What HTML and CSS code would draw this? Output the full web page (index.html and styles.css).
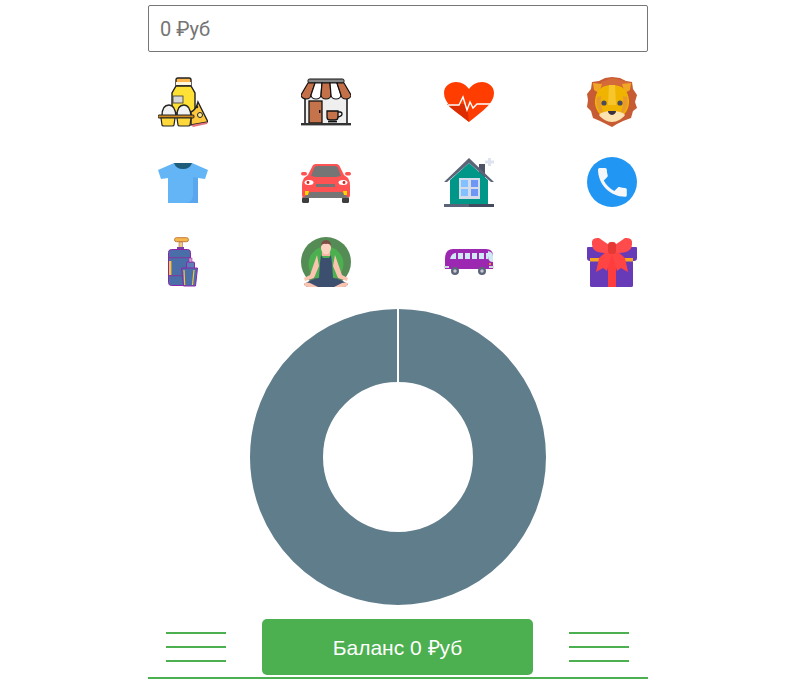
FILE: index.html
```html
<!DOCTYPE html>
<html lang="ru">
<head>
<meta charset="utf-8">
<title>Баланс</title>
<link rel="stylesheet" href="styles.css">
</head>
<body>
<main class="app">
  <input class="amount" type="text" placeholder="0 ₽уб">
  <div class="categories">
    <svg class="icon" viewBox="0 0 50 50">
      <path d="M20 1h11q2 0 2 2v5H18V3q0-2 2-2z" fill="#ffb74d" stroke="#222" stroke-width="1.4"/>
      <rect x="18" y="5" width="15" height="3" fill="#fff8e1"/>
      <path d="M18 9h15l4 7v20H14V16z" fill="#ffe135" stroke="#222" stroke-width="1.4"/>
      <rect x="15" y="19" width="10" height="7" fill="#d7d7d7" stroke="#333" stroke-width=".8"/>
      <path d="M40 25l10 20-17 3v-13q5-2 7-10z" fill="#ffc83d" stroke="#222" stroke-width="1.4"/>
      <path d="M33 48l17-3-1 2-14 3z" fill="#e5737b"/>
      <circle cx="42" cy="38" r="2.5" fill="#ffe9a0" stroke="#222"/>
      <circle cx="39" cy="30" r="1.2" fill="#222"/>
      <path d="M4 39q0-11 7-11 6 0 7 11zM19 39q0-11 7-11 6 0 7 11z" fill="#f2f2f2" stroke="#222" stroke-width="1.4"/>
      <rect x="0" y="38" width="36" height="3" rx="1" fill="#d18a1c" stroke="#222"/>
      <path d="M3 41h14l-1 7q0 1-2 1H6q-2 0-2-1zM19 41h14l-1 7q0 1-2 1H22q-2 0-2-1z" fill="#ffd93b" stroke="#222" stroke-width="1.2"/>
    </svg>
    <svg class="icon" viewBox="0 0 50 50">
      <rect x="4" y="19" width="42" height="28" fill="#efefef" stroke="#111" stroke-width="1.5"/>
      <rect x="7" y="2" width="36" height="4" rx="1.5" fill="#8a8a8a" stroke="#111"/>
      <path d="M7 6h7l-4 12a5 4 0 0 1-10 0z" fill="#c4714a" stroke="#111" stroke-width="1.2"/>
      <path d="M14 6h7l-1 12a5 4 0 0 1-10 0z" fill="#fff" stroke="#111" stroke-width="1.2"/>
      <path d="M21 6h8l1 12a5 4 0 0 1-10 0z" fill="#c4714a" stroke="#111" stroke-width="1.2"/>
      <path d="M29 6h7l4 12a5 4 0 0 1-10 0z" fill="#fff" stroke="#111" stroke-width="1.2"/>
      <path d="M36 6h7l7 12a5 4 0 0 1-10 0z" fill="#c4714a" stroke="#111" stroke-width="1.2"/>
      <rect x="8" y="24" width="13" height="22" fill="#c4734a" stroke="#111" stroke-width="1.3"/>
      <rect x="18" y="33" width="1.5" height="3" fill="#111"/>
      <path d="M26 34h11v6q0 3-3 3h-5q-3 0-3-3z" fill="#c4734a" stroke="#111" stroke-width="1.3"/>
      <path d="M37 35h2q2 0 2 2t-4 3" fill="none" stroke="#111" stroke-width="1.3"/>
      <rect x="27" y="44" width="9" height="1.4" fill="#111"/>
      <rect x="0" y="46" width="50" height="2.4" fill="#333"/>
    </svg>
    <svg class="icon" viewBox="0 0 50 50">
      <path d="M25 45C10 33 0 26 0 16 0 9 6 5 12 5c6 0 10 3 13 7 3-4 7-7 13-7 6 0 12 4 12 11 0 10-10 17-25 29z" fill="#ff3d00"/>
      <path d="M25 45C14 36 7 32 3 27h20l2 18z" fill="#dd2c00"/>
      <path d="M4 28h11l4-8 4 13 3-8 3 6 4-4h13" fill="none" stroke="#fff" stroke-width="1.4"/>
    </svg>
    <svg class="icon" viewBox="0 0 50 50">
      <path d="M25 0l8 1 6 3 6 1 1 7 4 6-2 7 2 6-4 3-2 7-8 3-6 3-5 3-6-3-6-3-7-3-2-7-4-4 1-7-1-6 4-5 1-7 7-1 6-3z" fill="#c75b33"/>
      <path d="M14 5l11-4 9 2 11 3-4 8H13z" fill="#d4693a"/>
      <path d="M6 6l9 1-3 9-5-3z" fill="#f0a726"/>
      <path d="M44 6l-9 1 3 9 5-3z" fill="#f0a726"/>
      <path d="M25 8c10 0 16 5 17 15 1 10-7 20-17 20S7 33 8 23C9 13 15 8 25 8z" fill="#f0b400"/>
      <path d="M10 20q-2 8 3 15l4 2q-4-8-3-18z" fill="#e89a2e"/>
      <path d="M40 20q2 8-3 15l-4 2q4-8 3-18z" fill="#e89a2e"/>
      <path d="M22 8h6l1 20h-8z" fill="#f7c52c"/>
      <path d="M25 34c5 0 11 1 13 4-3 4-8 7-13 7s-10-3-13-7c2-3 8-4 13-4z" fill="#fde3b0"/>
      <circle cx="17" cy="26" r="2.6" fill="#4d4a5c"/>
      <circle cx="33" cy="26" r="2.6" fill="#4d4a5c"/>
      <path d="M21 34h8q0 3-4 4-4-1-4-4z" fill="#3a3040"/>
    </svg>
    <svg class="icon" viewBox="0 0 50 50">
      <path d="M16 6h18l16 7-3 9-7-1v25H10V21l-7 1-3-9z" fill="#64b5f6"/>
      <path d="M35 20l5 1v25H27q8-1 8-8z" fill="#5aa7ef"/>
      <path d="M16 6h18q-2 6-9 6t-9-6z" fill="#1f5c7a"/>
    </svg>
    <svg class="icon" viewBox="0 0 50 50">
      <rect x="1" y="40" width="7" height="6" rx="1.5" fill="#3d3d3d"/>
      <rect x="41" y="40" width="7" height="6" rx="1.5" fill="#3d3d3d"/>
      <path d="M15 7h20q3 0 4 3l4 8 4 3q2 3 2 8v9q0 3-3 3H4q-3 0-3-3v-9q0-5 2-8l4-3 4-8q1-3 4-3z" fill="#ff5252"/>
      <path d="M16 9h18q2 0 3 2l3 8-5 1H15l-5-1 3-8q1-2 3-2z" fill="#757575"/>
      <rect x="0" y="15" width="6" height="3.5" rx="1.7" fill="#ff5252"/>
      <rect x="44" y="15" width="6" height="3.5" rx="1.7" fill="#ff5252"/>
      <rect x="15" y="27" width="19" height="3" fill="#757575"/>
      <ellipse cx="8" cy="25.500" rx="4.500" ry="2.500" fill="#fff"/>
      <ellipse cx="42" cy="25.500" rx="4.500" ry="2.500" fill="#fff"/>
      <circle cx="7" cy="25.500" r="1.400" fill="#c62828"/>
      <circle cx="43" cy="25.500" r="1.400" fill="#c62828"/>
      <path d="M9 35h32l7 6H2z" fill="#757575"/>
      <path d="M4 34h4l-1 4H4zM46 34h-4l1 4h3z" fill="#ffd600"/>
    </svg>
    <svg class="icon" viewBox="0 0 50 50">
      <rect x="35" y="7" width="6" height="14" fill="#4e5468"/>
      <path d="M6 23L25 6l19 17v25H6z" fill="#009688"/>
      <path d="M0 25L25 1l25 24h-3L25 6 3 25z" fill="#5c6479"/>
      <rect x="15" y="21" width="21" height="21" fill="#d5dbe8"/>
      <path d="M17 23h7v7h-7zM17 32h7v7h-7z" fill="#82c0ff"/>
      <path d="M27 23h7v7h-7zM27 32h7v7h-7z" fill="#6d96f5"/>
      <path d="M41 5h9M45.500 1v8" stroke="#dde3ef" stroke-width="3"/>
      <rect x="0" y="47" width="25" height="3" fill="#5c6479"/>
      <rect x="25" y="47" width="25" height="3" fill="#454b5e"/>
    </svg>
    <svg class="icon" viewBox="0 0 50 50">
      <circle cx="25" cy="25" r="25" fill="#2196f3"/>
      <path transform="translate(6.200 6.200) scale(1.6)" fill="#f5f7fa" d="M6.620 10.790c1.440 2.830 3.760 5.140 6.590 6.590l2.200-2.200c.27-.27.67-.36 1.020-.24 1.120.37 2.330.57 3.570.57.55 0 1 .45 1 1V20c0 .55-.45 1-1 1-9.390 0-17-7.610-17-17 0-.55.45-1 1-1h3.500c.55 0 1 .45 1 1 0 1.250.2 2.450.57 3.570.11.35.03.74-.25 1.020l-2.200 2.200z"/>
    </svg>
    <svg class="icon" viewBox="0 0 50 50">
      <rect x="16.500" y=".700" width="14" height="4" rx="2" fill="#f5b84a" stroke="#c77b3a"/>
      <rect x="21" y="5" width="3.500" height="7" fill="#f3c77f" stroke="#a9705f" stroke-width=".6"/>
      <rect x="19" y="10" width="7" height="3" fill="#7a3fa0"/>
      <rect x="10.500" y="12.500" width="22" height="36" rx="3" fill="#4a6fa8" stroke="#8e24aa"/>
      <rect x="11" y="20" width="21" height="1.200" fill="#7a3fa0"/>
      <rect x="11" y="38" width="21" height="1.200" fill="#7a3fa0"/>
      <rect x="11" y="24" width="2.400" height="14" fill="#f5c542"/>
      <rect x="28.500" y="25" width="8" height="8" rx="1" fill="#5a7fb5" stroke="#8e24aa"/>
      <rect x="31" y="21" width="3" height="4" fill="#d59ac9" stroke="#8e24aa" stroke-width=".5"/>
      <path d="M23.500 31h16l-2 18h-12z" fill="#4a6fa8" stroke="#8e24aa"/>
      <path d="M36 33l-1.500 15" stroke="#f5c542" stroke-width="1.200"/>
      <path d="M26 33l.7 15" stroke="#f5c542" stroke-width="1.200"/>
    </svg>
    <svg class="icon" viewBox="0 0 50 50">
      <circle cx="25" cy="25" r="25" fill="#558b55"/>
      <circle cx="25" cy="27" r="17.500" fill="#4caf50"/>
      <path d="M16 18l-7 20-6 3 1 3 9-3 5-12zM34 18l7 20 6 3-1 3-9-3-5-12z" fill="#fbc4b0"/>
      <path d="M21 15h8v4h-8z" fill="#f5b5a0"/>
      <ellipse cx="25" cy="11" rx="5" ry="6.500" fill="#fcd2c0"/>
      <path d="M20 9q0-6 5-6t5 6q-2-3-5-2-3-1-5 2z" fill="#7b4f45"/>
      <path d="M20 18l-1 8-1 15h14l-1-15-1-8-2 3h-6z" fill="#3d4f6f"/>
      <path d="M3 47q11-7 22-7t22 7q-1 3-6 3H9q-5 0-6-3z" fill="#3d4f6f"/>
      <path d="M3 46q3-1 6 0l8 4H8q-5 0-5-4zM47 46q-3-1-6 0l-8 4h9q5 0 5-4z" fill="#fbc4b0"/>
    </svg>
    <svg class="icon" viewBox="0 0 50 50">
      <path d="M9 12h33q7 0 7 7v13H1V22q0-10 8-10z" fill="#9c27b0"/>
      <path d="M6 22q1-5 5-6h1v6z" fill="#cfe8f5"/>
      <path d="M14 16h5v6h-5zM21 16h5v6h-5zM28 16h5v6h-5zM35 16h5v6h-5zM42 16h2v6h-2z" fill="#cfe8f5"/>
      <path d="M44 14q5 1 5 5v6q-5 0-5-6z" fill="#cfe8f5"/>
      <rect x="0" y="29" width="5" height="2" fill="#cfd8dc"/>
      <rect x="45" y="29" width="5" height="2" fill="#cfd8dc"/>
      <circle cx="11" cy="34" r="4" fill="#5c6479"/>
      <circle cx="11" cy="34" r="1.700" fill="#c5cad6"/>
      <circle cx="38" cy="34" r="4" fill="#5c6479"/>
      <circle cx="38" cy="34" r="1.700" fill="#c5cad6"/>
      <circle cx="46" cy="27" r="1" fill="#ffb300"/>
    </svg>
    <svg class="icon" viewBox="0 0 50 50">
      <path d="M3 24h43v25q0 1-2 1H5q-2 0-2-1z" fill="#673ab7"/>
      <path d="M1 10h48q1 0 1 1v10q0 3-3 3H3q-3 0-3-3V11q0-1 1-1z" fill="#673ab7"/>
      <rect x="3" y="21" width="43" height="3.500" fill="#f5a623"/>
      <rect x="21" y="13" width="8" height="37" fill="#ff3d3d"/>
      <path d="M20 14L12 21 9 35l7-4 4 3 5-17z" fill="#ff4444"/>
      <path d="M30 14l8 7 3 14-7-4-4 3-5-17z" fill="#ff4444"/>
      <path d="M25 10L12 1Q4 0 5 7q0 6 6 8 8 2 14 0 6 2 14-0 6-2 6-8 1-7-7-6z" fill="#ff4b4b"/>
      <rect x="21" y="5" width="8" height="12" rx="3" fill="#e53935"/>
    </svg>
  </div>
  <svg class="chart" viewBox="0 0 296 296">
    <circle class="chart-ring" cx="148" cy="148" r="111.500"/>
    <line class="chart-gap" x1="148" y1="0" x2="148" y2="74"/>
  </svg>
  <footer class="balance">
    <div class="menu"><span></span><span></span><span></span></div>
    <button class="balance-button" type="button">Баланс 0 ₽уб</button>
    <div class="menu"><span></span><span></span><span></span></div>
  </footer>
</main>
</body>
</html>
```
FILE: styles.css
```css
html, body {
  margin: 0;
  padding: 0;
  background: #fff;
  overflow: hidden;
}
body {
  font-family: "Liberation Sans", Arial, sans-serif;
  padding-right: 12px;
}
.app {
  width: 500px;
  margin: 0 auto;
  padding-top: 5px;
  display: flex;
  flex-direction: column;
}
.amount {
  box-sizing: border-box;
  width: 100%;
  height: 47px;
  padding: 0 11px;
  border: 1px solid #767676;
  border-radius: 2px;
  font-family: Roboto, "Liberation Sans", sans-serif;
  font-size: 20px;
  outline: none;
}
.amount::placeholder {
  color: #757575;
}
.categories {
  margin-top: 25px;
  padding: 0 11px 0 10px;
  display: grid;
  grid-template-columns: repeat(4, 50px);
  justify-content: space-between;
  row-gap: 30px;
}
.icon {
  width: 50px;
  height: 50px;
  display: block;
}
.chart {
  width: 296px;
  height: 296px;
  margin: 22px auto 0;
  display: block;
}
.chart-ring {
  fill: none;
  stroke: #607d8b;
  stroke-width: 73px;
}
.chart-gap {
  stroke: #fff;
  stroke-width: 2px;
}
.balance {
  margin-top: 14px;
  padding: 0 0 2px 18px;
  border-bottom: 2px solid #4caf50;
  display: flex;
  align-items: center;
  gap: 36px;
}
.menu {
  width: 60px;
  display: flex;
  flex-direction: column;
  gap: 12px;
}
.menu span {
  display: block;
  height: 2px;
  background: #4caf50;
}
.balance-button {
  width: 271px;
  height: 56px;
  border: 0;
  border-radius: 5px;
  background: #4caf50;
  color: #fff;
  font-family: "Liberation Sans", Arial, sans-serif;
  font-size: 21px;
}
```
